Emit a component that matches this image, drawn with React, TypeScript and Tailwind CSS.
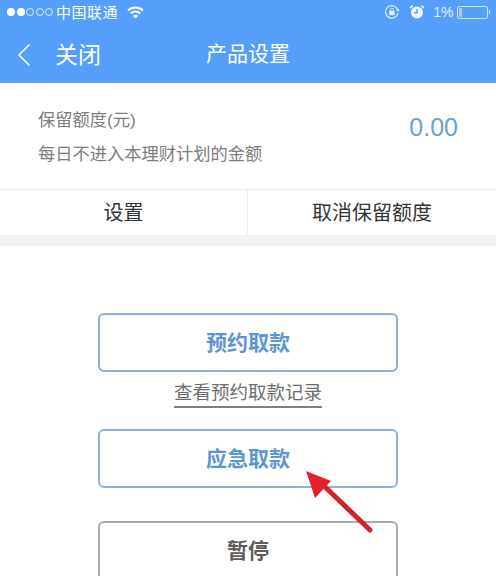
const cjk = "font-['Liberation_Sans','Noto_Sans_CJK_SC',sans-serif]"

function StatusBar() {
  return (
    <div className="flex h-6 items-center justify-between pl-[7px] pr-[6px] text-white">
      <div className="flex items-center">
        {/* signal dots */}
        <div className="flex gap-[1.5px]">
          <span className="h-[8px] w-[8px] rounded-full bg-white" />
          <span className="h-[8px] w-[8px] rounded-full bg-white" />
          <span className="h-[8px] w-[8px] rounded-full border border-white/80" />
          <span className="h-[8px] w-[8px] rounded-full border border-white/80" />
          <span className="h-[8px] w-[8px] rounded-full border border-white/80" />
        </div>
        <span className="ml-[3px] text-[15px] leading-none tracking-[0.5px]">中国联通</span>
        <svg className="ml-[9px]" width="17" height="13" viewBox="0 0 17 13" fill="none">
          <path d="M1 4.6C5.2 .6 11.8 .6 16 4.6" stroke="#fff" strokeWidth="2" />
          <path d="M3.7 7.4C6.4 4.9 10.6 4.9 13.3 7.4" stroke="#fff" strokeWidth="2" />
          <path d="M8.5 12.6 5.8 9.7C7.4 8.4 9.6 8.4 11.2 9.7Z" fill="#fff" />
        </svg>
      </div>
      <div className="flex items-center">
        <svg width="16" height="16" viewBox="0 0 16 16" fill="none">
          <path d="M13.6 5.4A6.3 6.3 0 1 0 14 9" stroke="#e3efff" strokeWidth="1.2" />
          <path d="M12 5.5 15.6 5 14 8Z" fill="#e3efff" />
          <rect x="5.2" y="7" width="5.4" height="4.2" rx=".6" fill="#e3efff" />
          <path d="M6.3 7V5.8a1.6 1.6 0 0 1 3.2 0V7" stroke="#e3efff" strokeWidth="1" />
        </svg>
        <svg className="ml-[9px]" width="16" height="16" viewBox="0 0 16 16" fill="none">
          <circle cx="8" cy="8.6" r="6" fill="#f2f7ff" />
          <path d="M8 5v3.8H5.2" stroke="#559ffb" strokeWidth="1.4" />
          <path d="M1 4 3.6 1.6M15 4 12.4 1.6" stroke="#f2f7ff" strokeWidth="1.6" />
        </svg>
        <span className="ml-[8px] text-[14px] leading-none text-[#e3efff]">1%</span>
        <div className="ml-[3px] flex h-[13px] w-[31px] rounded-[2px] border border-white/70 p-px">
          <span className="w-[3px] bg-[#b9c4cf]" />
        </div>
        <span className="ml-px h-[4px] w-[1.5px] bg-white/70" />
      </div>
    </div>
  )
}

function Header() {
  return (
    <div className="h-[83px] bg-[#559ffb]">
      <StatusBar />
      <div className="relative flex h-[59px] items-center justify-center text-white">
        <div className="absolute left-[17px] top-0 flex h-full items-center pt-[3px]">
          <svg width="14" height="24" viewBox="0 0 14 24" fill="none">
            <path d="M12.5 1.5 2 12l10.5 10.5" stroke="#fff" strokeWidth="1.5" />
          </svg>
          <span className="ml-[24px] text-[23px] leading-none">关闭</span>
        </div>
        <span className="text-[21px] leading-none">产品设置</span>
      </div>
    </div>
  )
}

function ActionButton({ label, color }: { label: string; color: string }) {
  return (
    <button className={`h-[59px] w-[300px] rounded-[6px] border-2 bg-white text-[21px] font-bold ${color}`}>
      {label}
    </button>
  )
}

export default function App() {
  return (
    <div className={`relative h-[576px] w-[496px] overflow-hidden bg-white ${cjk}`}>
      <Header />

      {/* reserve amount */}
      <div className="flex h-[107px] justify-between border-b border-[#e9ecef] pl-[38px] pr-[38px]">
        <div className="pt-[29px] text-[17.25px] leading-none text-[#7d7d7d]">
          <div>保留额度(元)</div>
          <div className="mt-[17px]">每日不进入本理财计划的金额</div>
        </div>
        <div className="pt-[32px] text-[25px] leading-none text-[#6ba3cc]">0.00</div>
      </div>
      <div className="flex h-[45px] text-[20px] text-[#333]">
        <div className="flex w-[248px] items-center justify-center border-r border-[#e9ecef]">设置</div>
        <div className="flex flex-1 items-center justify-center">取消保留额度</div>
      </div>
      <div className="h-[11px] bg-[#f0f3f6]" />

      {/* actions */}
      <div className="flex flex-col items-center pt-[67px]">
        <ActionButton label="预约取款" color="border-[#8db2d6] text-[#5b96d2]" />
        <div className="mt-[10px] border-b-2 border-[#808080] pb-[2px] text-[18.5px] leading-[22px] text-[#6e6e6e]">
          查看预约取款记录
        </div>
        <div className="mt-[21px]">
          <ActionButton label="应急取款" color="border-[#8db2d6] text-[#5b96d2]" />
        </div>
        <div className="mt-[33px]">
          <ActionButton label="暂停" color="border-[#aaaaaa] text-[#5c5c5c]" />
        </div>
      </div>

      {/* red annotation arrow */}
      <svg className="absolute left-[300px] top-[465px]" width="80" height="72" viewBox="0 0 80 72" fill="none">
        <path d="M70 65 22 19" stroke="#d2232c" strokeWidth="5" strokeLinecap="round" />
        <path d="M6 6 31 16 15 33Z" fill="#e0202b" />
      </svg>
    </div>
  )
}
